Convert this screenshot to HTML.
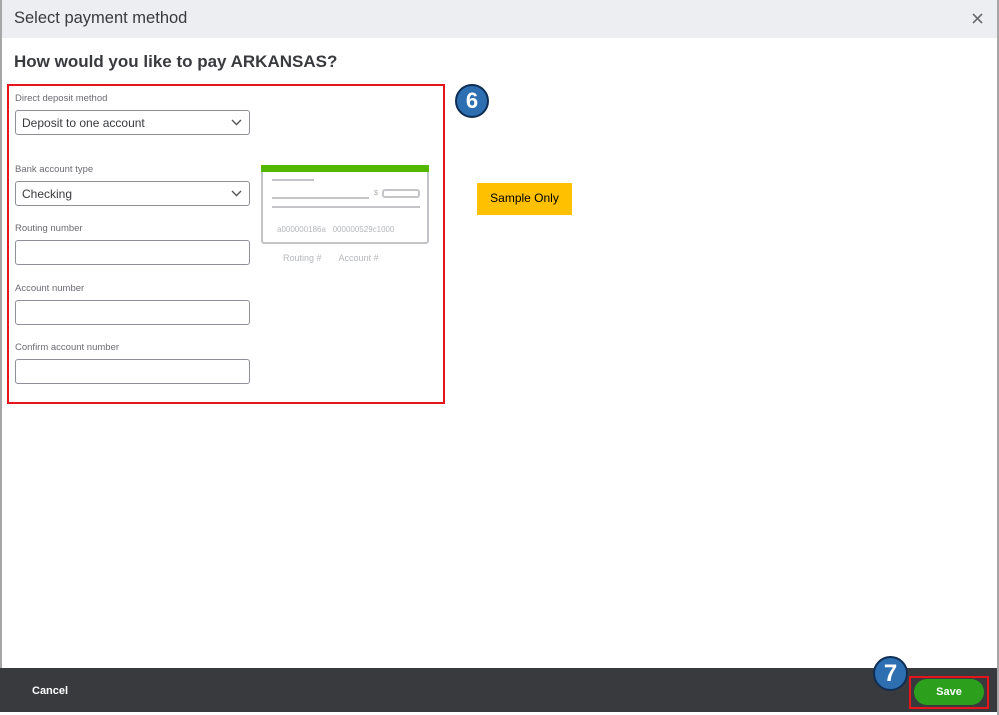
<!DOCTYPE html>
<html><head><meta charset="utf-8"><style>
*{box-sizing:border-box;margin:0;padding:0}
body{width:999px;height:715px;background:#fff;font-family:"Liberation Sans",sans-serif;position:relative;overflow:hidden}
.abs{position:absolute}
.hdr{left:0;top:0;width:997px;height:38px;background:#eceef1}
.lbl{font-size:9.5px;color:#6b6c72}
.inp{width:235px;height:25px;border:1px solid #8d9096;border-radius:3px;background:#fff;font-size:12px;color:#393a3d;padding:5px 6px}
.inp svg{position:absolute;right:7px;top:8px}
.line{background:#c3c5c9;height:2px}
</style></head><body>
<div class="abs hdr"></div>
<div class="abs" style="left:0;top:0;width:2px;height:668px;background:#a6a6a6"></div>
<div class="abs" style="left:997px;top:0;width:2px;height:715px;background:#a6a6a6"></div>
<div class="abs" style="left:14px;top:9px;font-size:16.5px;color:#393a3d">Select payment method</div>
<svg class="abs" style="left:972px;top:13px" width="11" height="11" viewBox="0 0 11 11"><path d="M1 1L10 10M10 1L1 10" stroke="#6b6c72" stroke-width="1.6"/></svg>
<div class="abs" style="left:14px;top:52px;font-size:17px;font-weight:bold;color:#393a3d">How would you like to pay ARKANSAS?</div>
<div class="abs" style="left:7px;top:84px;width:438px;height:320px;border:2px solid #e8141b"></div>

<div class="abs lbl" style="left:15px;top:93px">Direct deposit method</div>
<div class="abs inp" style="left:15px;top:110px">Deposit to one account<svg width="11" height="7" viewBox="0 0 11 7"><path d="M1 1L5.5 5.5L10 1" stroke="#555" stroke-width="1.4" fill="none"/></svg></div>
<div class="abs lbl" style="left:15px;top:164px">Bank account type</div>
<div class="abs inp" style="left:15px;top:181px">Checking<svg width="11" height="7" viewBox="0 0 11 7"><path d="M1 1L5.5 5.5L10 1" stroke="#555" stroke-width="1.4" fill="none"/></svg></div>
<div class="abs lbl" style="left:15px;top:223px">Routing number</div>
<div class="abs inp" style="left:15px;top:240px"></div>
<div class="abs lbl" style="left:15px;top:283px">Account number</div>
<div class="abs inp" style="left:15px;top:300px"></div>
<div class="abs lbl" style="left:15px;top:342px">Confirm account number</div>
<div class="abs inp" style="left:15px;top:359px"></div>

<div class="abs" style="left:261px;top:165px;width:168px;height:7px;background:#53b700"></div>
<div class="abs" style="left:261px;top:172px;width:168px;height:72px;border:2px solid #c3c5c9;border-top:none;border-radius:0 0 3px 3px"></div>
<div class="abs line" style="left:272px;top:179px;width:42px"></div>
<div class="abs line" style="left:272px;top:197px;width:97px"></div>
<div class="abs" style="left:374px;top:190px;font-size:7px;color:#aaa">$</div>
<div class="abs" style="left:382px;top:189px;width:38px;height:9px;border:2px solid #c3c5c9;border-radius:3px"></div>
<div class="abs line" style="left:272px;top:206px;width:148px"></div>
<div class="abs" style="left:277px;top:225px;font-size:8px;color:#b5b7bb">a000000186a &nbsp; 000000529c1000</div>
<div class="abs" style="left:283px;top:253px;font-size:9px;color:#b5b7bb">Routing # &nbsp; &nbsp; &nbsp; Account #</div>

<div class="abs" style="left:455px;top:84px;width:34px;height:34px;border-radius:50%;background:#2e6fb1;border:2px solid #0f2e55;color:#fff;font-weight:bold;font-size:22px;text-align:center;line-height:30px">6</div>
<div class="abs" style="left:477px;top:183px;width:95px;height:32px;background:#ffc000;font-size:12px;color:#000;text-align:center;line-height:30px">Sample Only</div>

<div class="abs" style="left:0;top:668px;width:997px;height:44px;background:#393a3d"></div>
<div class="abs" style="left:32px;top:685px;font-size:11px;font-weight:bold;color:#fff">Cancel</div>
<div class="abs" style="left:909px;top:676px;width:80px;height:33px;border:2px solid #e8141b"></div>
<div class="abs" style="left:914px;top:679px;width:70px;height:26px;background:#2ca01c;border-radius:13px;color:#fff;font-size:11px;font-weight:bold;text-align:center;line-height:26px">Save</div>
<div class="abs" style="left:873px;top:656px;width:35px;height:35px;border-radius:50%;background:#2e6fb1;border:2px solid #0f2e55;color:#fff;font-weight:bold;font-size:24px;text-align:center;line-height:31px">7</div>
</body></html>
